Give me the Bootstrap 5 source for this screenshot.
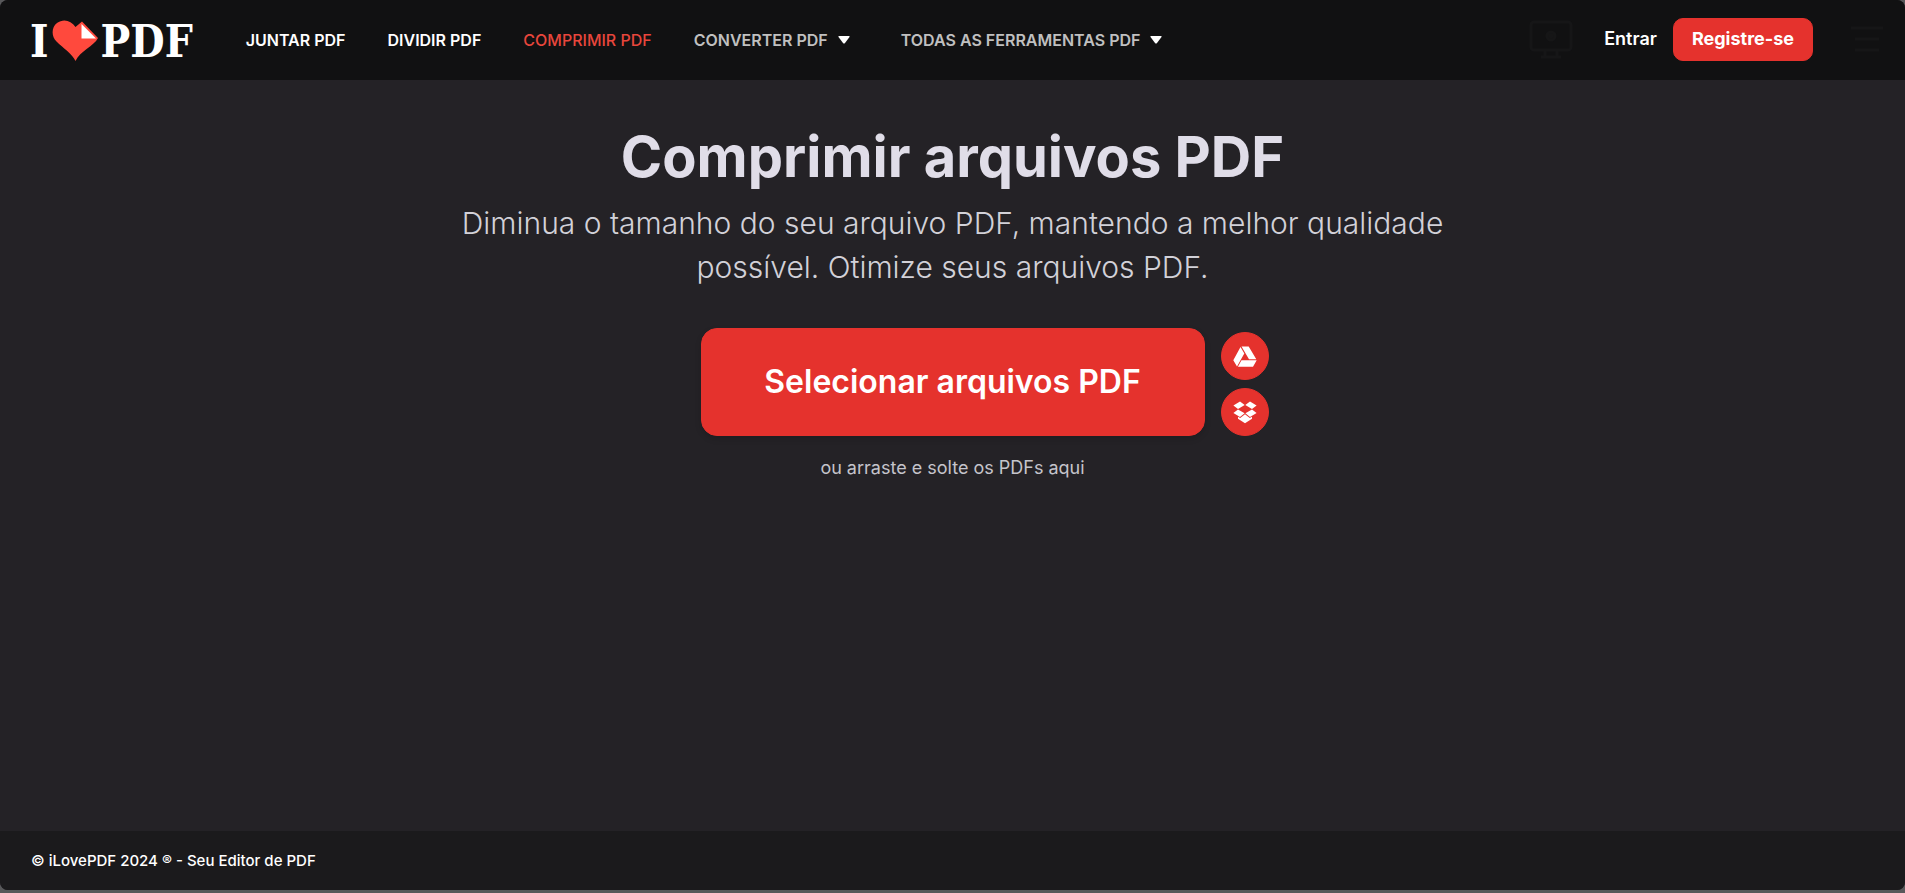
<!DOCTYPE html>
<html lang="pt-BR">
<head>
<meta charset="utf-8">
<meta name="viewport" content="width=device-width, initial-scale=1">
<title>Comprimir arquivos PDF</title>
<link href="https://cdn.jsdelivr.net/npm/bootstrap@5.3.0/dist/css/bootstrap.min.css" rel="stylesheet">
<style>
  body { background: #58585a; font-family: Inter, "Liberation Sans", sans-serif; color: #fff; }
  .app-shell { min-height: calc(100vh - 3px); background: #242226; border-radius: 8px; overflow: hidden; }
  .topbar { background: #111112; min-height: 80px; padding: 0 20px 0 30px; }
  .brand-logo { font: 700 44px/48px "DejaVu Serif Condensed", "DejaVu Serif", serif; margin-right: 53px; }
  .brand-logo span { padding-top: 3px; }
  .brand-logo svg { margin: 0 3px; }
  .menu-links { gap: 42px; }
  .menu-links .nav-link { padding: 0; font-size: 16px; line-height: 24px; font-weight: 600; color: #c0c0c0; white-space: nowrap; }
  .menu-links .nav-link.bright { color: #fff; }
  .menu-links .nav-link.active { color: #e8463c; font-weight: 500; }
  .menu-links svg { margin-left: 10px; }
  .menu-links .wide-gap { margin-left: 9px; }
  .ghost { color: #161617; }
  .account { gap: 16px; padding-bottom: 2px; }
  .account .ghost { margin-right: 15px; }
  .account .ghost:last-child { margin: 0 0 0 20px; }
  .login-link { font-size: 18px; line-height: 24px; font-weight: 600; }
  .btn-brand { --bs-btn-color: #fff; --bs-btn-bg: #e5322d; --bs-btn-border-color: #e5322d; --bs-btn-hover-color: #fff; --bs-btn-hover-bg: #c72a25; --bs-btn-hover-border-color: #c72a25; }
  .btn-signup { height: 43px; padding: 0 18px; border-radius: 10px; font-size: 18px; line-height: 24px; font-weight: 700; }
  .page-title { font-size: 56px; line-height: 64px; font-weight: 700; color: #e0dde8; margin: 45px 0 12px; }
  .page-lead { max-width: 1020px; font-size: 30px; line-height: 44px; font-weight: 300; color: #d2d1d8; margin-bottom: 39px; }
  .upload-grid { display: grid; grid-template-columns: 1fr auto 1fr; column-gap: 16px; }
  .btn-upload { grid-column: 2; width: 504px; max-width: 70vw; min-height: 108px; border-radius: 16px; font-size: 32px; font-weight: 600; box-shadow: 0 3px 6px rgba(0,0,0,.14); }
  .btn-cloud { width: 48px; height: 48px; padding: 0; }
  .drop-hint { font-size: 18px; line-height: 24px; color: #c5c4cb; margin-top: 20px; }
  .bottombar { background: #1b1a1c; min-height: 59px; padding: 0 31px; font-size: 15px; line-height: 24px; font-weight: 500; }
</style>
</head>
<body>
<div class="app-shell d-flex flex-column">
  <header class="topbar d-flex align-items-center">
    <a href="#" class="brand-logo d-flex align-items-center text-white text-decoration-none">
      <span>I</span>
      <svg width="46" height="41" viewBox="0 0 46 41" aria-hidden="true">
        <path fill="#ff493d" d="M23.500 41C20.500 34 11 28 4.500 21.500C-1 16-.5 7 5 3C11-1.500 19 0 23.500 7L30 1.500L46 18C42 26 28 31 23.500 41Z"/>
        <path fill="#fff" d="M29.500 4V18.500H44Z"/>
      </svg>
      <span>PDF</span>
    </a>
    <nav>
      <ul class="nav menu-links flex-nowrap">
        <li><a class="nav-link bright" href="#">JUNTAR PDF</a></li>
        <li><a class="nav-link bright" href="#">DIVIDIR PDF</a></li>
        <li><a class="nav-link active" aria-current="page" href="#">COMPRIMIR PDF</a></li>
        <li><a class="nav-link d-flex align-items-center" href="#">CONVERTER PDF<svg width="12" height="8" viewBox="0 0 12 8" aria-hidden="true"><path fill="#fff" d="M1 0h10q1 0 .5 1L7 7q-1 1-2 0L.5 1Q0 0 1 0z"/></svg></a></li>
        <li class="wide-gap"><a class="nav-link d-flex align-items-center" href="#">TODAS AS FERRAMENTAS PDF<svg width="12" height="8" viewBox="0 0 12 8" aria-hidden="true"><path fill="#fff" d="M1 0h10q1 0 .5 1L7 7q-1 1-2 0L.5 1Q0 0 1 0z"/></svg></a></li>
      </ul>
    </nav>
    <div class="account d-flex align-items-center ms-auto">
      <svg class="ghost" width="44" height="42" viewBox="0 0 44 42" fill="none" stroke="currentColor" stroke-width="3" aria-hidden="true"><rect x="2" y="4" width="40" height="28" rx="3"/><path d="M12 39h20M16 32v7M28 32v7"/><circle cx="22" cy="18" r="4" fill="currentColor"/></svg>
      <a href="#" class="login-link text-white text-decoration-none">Entrar</a>
      <button type="button" class="btn btn-brand btn-signup">Registre-se</button>
      <svg class="ghost" width="36" height="36" viewBox="0 0 36 36" stroke="currentColor" stroke-width="3" aria-hidden="true"><path d="M2 7h32M6 18h24M6 29h24"/></svg>
    </div>
  </header>

  <main class="flex-grow-1 text-center">
    <h1 class="page-title">Comprimir arquivos PDF</h1>
    <p class="page-lead mx-auto">Diminua o tamanho do seu arquivo PDF, mantendo a melhor qualidade possível. Otimize seus arquivos PDF.</p>
    <div class="upload-grid">
      <button type="button" class="btn btn-brand btn-upload">Selecionar arquivos PDF</button>
      <div class="d-flex flex-column justify-content-end gap-2">
        <button type="button" class="btn btn-brand btn-cloud rounded-circle d-flex align-items-center justify-content-center" aria-label="Google Drive">
          <svg width="24" height="21" viewBox="0 0 24 21" fill="#fff" aria-hidden="true"><path d="M7.500 1L11.300 7.400L4 20.500L.3 14.200ZM8.500 .5H15.700L23.300 13.300H16ZM8.500 14.200H23.700L20 20.700H4.900Z"/></svg>
        </button>
        <button type="button" class="btn btn-brand btn-cloud rounded-circle d-flex align-items-center justify-content-center" aria-label="Dropbox">
          <svg width="24" height="23" viewBox="0 0 24 23" fill="#fff" aria-hidden="true"><path d="M7 .5L11.700 4L5 8L.4 4.400ZM17 .5L23.600 4.400L19 8L12.300 4ZM5 8.400L11.600 12.300L7 15.900L.4 12ZM19 8.400L23.600 12L17 15.900L12.400 12.300ZM12 13.200L16.800 17L19 15.700V17.800L12 22.300L5 17.800V15.700L7.200 17Z"/></svg>
        </button>
      </div>
    </div>
    <p class="drop-hint mb-0">ou arraste e solte os PDFs aqui</p>
  </main>

  <footer class="bottombar d-flex align-items-center">© iLovePDF 2024 ® - Seu Editor de PDF</footer>
</div>
<script src="https://cdn.jsdelivr.net/npm/bootstrap@5.3.0/dist/js/bootstrap.bundle.min.js"></script>
</body>
</html>
